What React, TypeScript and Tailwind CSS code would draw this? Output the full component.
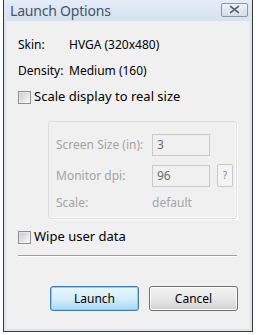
function CheckBox() {
  return (
    <span className="w-[13px] h-[13px] border border-[#8e8f8f] bg-gradient-to-br from-[#dcdcdc] to-[#fbfbfb] shrink-0 flex items-center justify-center">
      <span className="w-[9px] h-[9px] bg-gradient-to-br from-[#cbcfd5] to-[#f6f6f6]" />
    </span>
  );
}

function Field({ value }: { value: string }) {
  return (
    <div className="w-[58px] h-[22px] border border-[#c9c9c9] bg-[#f0f0f0] text-[#6d6d6d] pl-[4px] flex items-center">
      {value}
    </div>
  );
}

export default function App() {
  return (
    <div className="w-[257px] h-[335px] bg-white font-['Noto_Sans',sans-serif] text-[12px] text-black">
      <div className="ml-[3px] w-[250px] h-[332px] border-x border-b border-[#3a3a3a] bg-[#dce7f3] flex flex-col">
        {/* title bar */}
        <div className="h-[21px] flex items-center justify-between pl-[6px] pr-[4px] bg-gradient-to-b from-[#e4ecf6] to-[#d6e2f0]">
          <span className="text-[14px] text-[#44536a] leading-none tracking-[-0.2px]">Launch Options</span>
          <span className="w-[27px] h-[14px] mt-[-2px] border border-[#8a96a6] rounded-[2px] bg-gradient-to-b from-[#eef3f9] to-[#d3dde9] flex items-center justify-center">
            <svg width="13" height="9" viewBox="0 0 13 9">
              <path d="M2 1 L11 8 M11 1 L2 8" stroke="#eef2f6" strokeWidth="3.4" strokeLinecap="square" />
              <path d="M2 1 L11 8 M11 1 L2 8" stroke="#5f6670" strokeWidth="1.6" />
            </svg>
          </span>
        </div>
        {/* client area */}
        <div className="flex-1 mx-[1px] mb-[1px] bg-[#f0f0f0] flex flex-col px-[12px] pt-[11px] border border-[#d5e1ee] border-t-0">
          <div className="flex items-center h-[26px]">
            <span className="w-[51px]">Skin:</span>
            <span>HVGA (320x480)</span>
          </div>
          <div className="flex items-center h-[26px]">
            <span className="w-[51px]">Density:</span>
            <span>Medium (160)</span>
          </div>
          <div className="flex items-center gap-[3px] h-[22px] mt-[2px] text-[13px]">
            <CheckBox />
            <span>Scale display to real size</span>
          </div>
          <div className="ml-[30px] mr-[1px] mt-[13px] h-[98px] border border-[#dcdcdc] rounded-[3px] shadow-[inset_-1px_-1px_0_#ffffff,1px_1px_0_#ffffff] pl-[7px] pt-[12px] text-[#a4a4a4] flex flex-col gap-[8px]">
            <div className="flex items-center">
              <span className="w-[96px]">Screen Size (in):</span>
              <Field value="3" />
            </div>
            <div className="flex items-center">
              <span className="w-[96px]">Monitor dpi:</span>
              <Field value="96" />
              <span className="ml-[7px] w-[16px] h-[23px] border border-[#c9c9c9] rounded-[2px] bg-[#f4f4f4] text-[10px] text-[#7a8aa6] flex items-center justify-center">?</span>
            </div>
            <div className="flex items-center h-[16px]">
              <span className="w-[96px]">Scale:</span>
              <span>default</span>
            </div>
          </div>
          <div className="flex items-center gap-[3px] h-[22px] mt-[7px] text-[13px]">
            <CheckBox />
            <span>Wipe user data</span>
          </div>
          <div className="mt-[7px] mr-[1px] h-[2px] border-t border-[#a0a0a0] border-b border-b-white" />
          <div className="flex justify-end gap-[10px] mt-[29px] mr-[0px]">
            <button className="w-[89px] h-[25px] rounded-[3px] border border-[#3c7fb1] bg-gradient-to-b from-[#e8f6fd] via-[#d4eefb] to-[#a7d9f5] shadow-[inset_0_0_0_1px_#7fd3f7] text-[12px]">
              Launch
            </button>
            <button className="w-[89px] h-[25px] rounded-[3px] border border-[#707070] bg-gradient-to-b from-[#f2f2f2] via-[#e8e8e8] to-[#d2d2d2] shadow-[inset_0_0_0_1px_#fcfcfc] text-[12px]">
              Cancel
            </button>
          </div>
        </div>
      </div>
    </div>
  );
}
